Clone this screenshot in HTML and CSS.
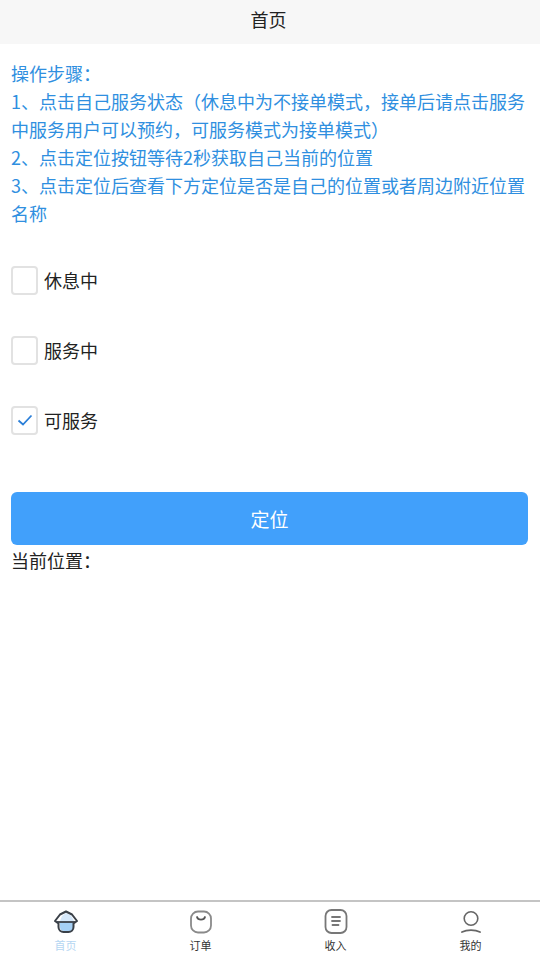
FILE: index.html
```html
<!DOCTYPE html>
<html lang="zh-CN">
  <head>
    <meta charset="UTF-8" />
    <meta name="viewport" content="width=device-width, initial-scale=1.0" />
    <title>首页</title>
    <link rel="stylesheet" href="styles.css">
  </head>
  <body>
    <div class="page">
      <div class="nav_bar">首页</div>
      <div class="content">
        <div class="steps">
          操作步骤：<br>
          1、点击自己服务状态（休息中为不接单模式，接单后请点击服务中服务用户可以预约，可服务模式为接单模式）<br>
          2、点击定位按钮等待2秒获取自己当前的位置<br>
          3、点击定位后查看下方定位是否是自己的位置或者周边附近位置名称
        </div>
        <div class="status_list">
          <div class="status_row">
            <span class="check_box"></span>
            <span>休息中</span>
          </div>
          <div class="status_row">
            <span class="check_box"></span>
            <span>服务中</span>
          </div>
          <div class="status_row">
            <span class="check_box">
              <svg width="20" height="20" viewBox="0 0 20 20"><path d="M3.500 10.500l4.500 4 8.500-9" fill="none" stroke="#2b7fd8" stroke-width="1.800"/></svg>
            </span>
            <span>可服务</span>
          </div>
        </div>
        <div class="locate_btn">定位</div>
        <div class="location">当前位置：</div>
      </div>
      <div class="tab_bar">
        <div class="tab tab_active">
          <svg width="26" height="26" viewBox="0 0 26 26">
            <path d="M13 4l5 2.500 3 5.500v1H7v-1l2-5z" fill="#d5e8fa"/>
            <path d="M7 13h14v5a4 4 0 0 1-4 4h-6a4 4 0 0 1-4-4z" fill="#a5d0f5"/>
            <path d="M13 2.500l6 3 5 6.500-3.500 2.500V18a5 5 0 0 1-5 5h-5a5 5 0 0 1-5-5v-3.500L2 12l5-6.500z" fill="none" stroke="#3a4048" stroke-width="2" stroke-linejoin="round"/>
            <path d="M4 13h18" stroke="#3a4048" stroke-width="1.800"/>
          </svg>
          <span>首页</span>
        </div>
        <div class="tab">
          <svg width="26" height="26" viewBox="0 0 26 26">
            <rect x="3" y="2.500" width="20" height="21" rx="7" fill="none" stroke="#8a8a8a" stroke-width="1.800"/>
            <path d="M9 8c1 3.500 7 3.500 8 0" fill="none" stroke="#555" stroke-width="1.800" stroke-linecap="round"/>
          </svg>
          <span>订单</span>
        </div>
        <div class="tab">
          <svg width="26" height="26" viewBox="0 0 26 26">
            <rect x="2.500" y="1" width="21" height="23" rx="6" fill="none" stroke="#777" stroke-width="1.800"/>
            <path d="M9 8h8M9 12h8M9.500 16h6" fill="none" stroke="#777" stroke-width="1.800" stroke-linecap="round"/>
          </svg>
          <span>收入</span>
        </div>
        <div class="tab">
          <svg width="26" height="26" viewBox="0 0 26 26">
            <circle cx="13" cy="9.500" r="6.800" fill="none" stroke="#666" stroke-width="1.600"/>
            <path d="M4 23c5-2.500 13-2.500 18 0" fill="none" stroke="#666" stroke-width="1.800" stroke-linecap="round"/>
          </svg>
          <span>我的</span>
        </div>
      </div>
    </div>
  </body>
</html>
```

FILE: styles.css
```css
* {
  box-sizing: border-box;
}

body {
  margin: 0;
  font-family: "Noto Sans CJK SC", "Noto Sans", sans-serif;
  color: #222222;
}

.page {
  display: flex;
  flex-direction: column;
  width: 540px;
  height: 960px;
  background-color: #ffffff;
}

.nav_bar {
  height: 44px;
  padding-right: 3px;
  line-height: 38px;
  text-align: center;
  font-size: 18px;
  background-color: #f7f7f7;
}

.content {
  flex: 1;
  padding: 15px 12px 0 11px;
}

.steps {
  font-size: 18px;
  line-height: 28px;
  color: #2f8fe0;
}

.status_list {
  margin-top: 18px;
}

.status_row {
  display: flex;
  align-items: center;
  gap: 6px;
  height: 70px;
  font-size: 18px;
}

.check_box {
  display: flex;
  align-items: center;
  justify-content: center;
  width: 27px;
  height: 29px;
  border: 2px solid #e2e2e2;
  border-radius: 4px;
}

.locate_btn {
  height: 53px;
  margin-top: 37px;
  line-height: 53px;
  text-align: center;
  font-size: 19px;
  color: #ffffff;
  border-radius: 6px;
  background-color: #41a0fb;
}

.location {
  font-size: 18px;
  line-height: 30px;
}

.tab_bar {
  display: flex;
  height: 60px;
  border-top: 2px solid #c4c4c4;
  background-color: #ffffff;
}

.tab {
  flex: 1;
  display: flex;
  flex-direction: column;
  align-items: center;
  padding: 7px 4px 0 0;
  font-size: 11px;
  line-height: 20px;
  color: #333333;
}

.tab_active {
  color: #b5d6f2;
}
```
